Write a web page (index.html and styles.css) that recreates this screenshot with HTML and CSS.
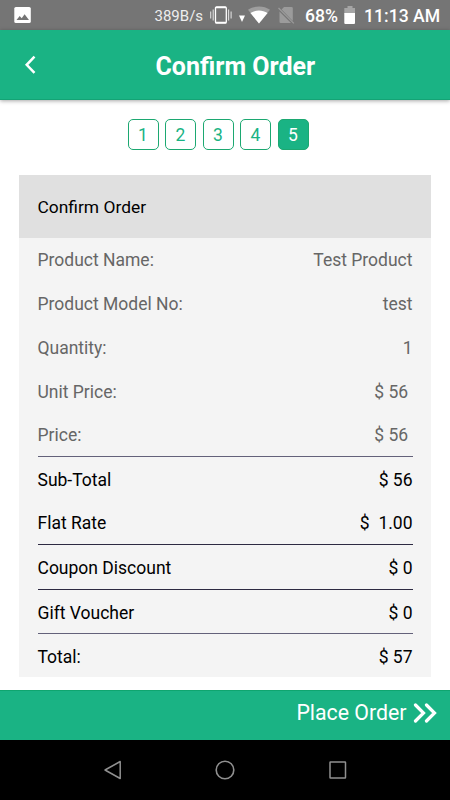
FILE: index.html
```html
<!DOCTYPE html>
<html lang="en">
<head>
<meta charset="utf-8">
<title>Confirm Order</title>
<link rel="stylesheet" href="styles.css">
</head>
<body>
<div class="screen">
  <div class="status">
    <svg class="ic-photo" width="18" height="18" viewBox="0 0 18 18"><rect x="0.3" y="1" width="16.5" height="16" rx="1.6" fill="#fff"/><path d="M2.5 14l3.2-4 2 2.300 2.900-4.100 4.400 5.800z" fill="#757575"/></svg>
    <span class="speed">389B/s</span>
    <svg class="ic-vibrate" width="22" height="18" viewBox="0 0 22 18"><rect x="5.500" y="0.800" width="10.800" height="16.400" rx="1.200" fill="none" stroke="#fff" stroke-width="1.300"/><path d="M6 1.500h10M6 16.500h10" stroke="#fff" stroke-width="1.300"/><path d="M3.200 3.500v11M18.600 3.500v11M.7 5.500v7M21.100 5.500v7" stroke="#ddd" stroke-width="1.100"/></svg>
    <svg class="ic-down" width="6" height="7" viewBox="0 0 6 7"><path d="M0 .6h6L3 7z" fill="#fff"/></svg>
    <svg class="ic-wifi" width="22" height="18" viewBox="0 0 22 18"><path d="M0 3.800C6-.7 16-.7 22 3.800L11 17.500z" fill="#9e9e9e"/><path d="M2.400 7C7.700 3.500 14.300 3.500 19.600 7L11 17.500z" fill="#fff"/></svg>
    <svg class="ic-sim" width="17" height="18" viewBox="0 0 17 18"><path d="M6 1h7.500q1.300 0 1.300 1.300V15L3.600 3.400zM1.500 5.500L13 17H2.800q-1.300 0-1.300-1.300z" fill="#9b9b9b"/><path d="M.5 2L15.800 17.300" stroke="#9b9b9b" stroke-width="1.200"/></svg>
    <span class="percent">68%</span>
    <svg class="ic-battery" width="12" height="18" viewBox="0 0 12 18"><path d="M3.500 0h5v2H11v5.500H.3V2h3.200z" fill="#a5a5a5"/><path d="M.3 7H11v10q0 1-1 1H1.300q-1 0-1-1z" fill="#fff"/></svg>
    <span class="clock">11:13 AM</span>
  </div>
  <header class="header">
    <svg class="back" width="12" height="20" viewBox="0 0 12 20"><path d="M10.500 1.700L2.700 9.800l7.800 8.100" fill="none" stroke="#fff" stroke-width="2.500"/></svg>
    <h1 class="title">Confirm Order</h1>
  </header>
  <nav class="steps">
    <span class="step">1</span><span class="step">2</span><span class="step">3</span><span class="step">4</span><span class="step active">5</span>
  </nav>
  <main class="card">
    <h2 class="card-title">Confirm Order</h2>
    <div class="rows">
      <div class="row"><span>Product Name:</span><span>Test Product</span></div>
      <div class="row"><span>Product Model No:</span><span>test</span></div>
      <div class="row"><span>Quantity:</span><span>1</span></div>
      <div class="row"><span>Unit Price:</span><span>$ 56&nbsp;</span></div>
      <div class="row"><span>Price:</span><span>$ 56&nbsp;</span></div>
      <div class="row strong line-soft"><span>Sub-Total</span><span>$ 56</span></div>
      <div class="row strong"><span>Flat Rate</span><span>$&nbsp; 1.00</span></div>
      <div class="row strong line"><span>Coupon Discount</span><span>$ 0</span></div>
      <div class="row strong line"><span>Gift Voucher</span><span>$ 0</span></div>
      <div class="row strong line-soft"><span>Total:</span><span>$ 57</span></div>
    </div>
  </main>
  <footer class="place">
    <span>Place Order</span>
    <svg width="24" height="20" viewBox="0 0 24 20"><path d="M2.500 2l8 8-8 8M13.500 2l8 8-8 8" fill="none" stroke="#fff" stroke-width="3.200" stroke-linecap="round"/></svg>
  </footer>
  <div class="navbar">
    <svg width="20" height="20" viewBox="0 0 20 20"><path d="M17.200 1.500v17L2 10z" fill="none" stroke="#909090" stroke-width="1.500" stroke-linejoin="round"/></svg>
    <svg width="20" height="20" viewBox="0 0 20 20"><circle cx="10" cy="10" r="8.800" fill="none" stroke="#909090" stroke-width="1.600"/></svg>
    <svg width="20" height="20" viewBox="0 0 20 20"><rect x="2" y="2" width="15.500" height="16" rx="0.500" fill="none" stroke="#909090" stroke-width="1.500"/></svg>
  </div>
</div>
</body>
</html>
```
FILE: styles.css
```css
* { box-sizing: border-box; }
body { margin: 0; font-family: Roboto, "Liberation Sans", sans-serif; background: #fff; }
svg { display: block; flex: none; }
.screen { width: 450px; height: 800px; display: flex; flex-direction: column; overflow: hidden; }
.status { height: 30px; flex: none; background: #757575; color: #fff; display: flex; align-items: center; padding-left: 14px; line-height: 30px; white-space: nowrap; }
.status span { flex: none; }
.speed { width: 56px; margin-left: 122.500px; margin-right: -0.500px; font-size: 15px; color: #eee; padding-top: 1px; }
.ic-down { margin: 7px 3px 0 7px; }
.ic-sim { margin-left: 8px; }
.percent { width: 38px; margin-left: 10px; font-size: 17.600px; font-weight: 500; padding-top: 1px; }
.ic-battery { margin-left: 1px; }
.clock { margin-left: 8px; font-size: 17.600px; font-weight: 500; padding-top: 1px; }
.header { height: 70px; flex: none; background: #1ab384; border-bottom: 1px solid #14a375; display: flex; align-items: center; padding-left: 24px; box-shadow: 0 1px 4px rgba(0, 0, 0, .35); color: #fff; }
.title { margin: 5px 0 0 119.500px; font-size: 25px; line-height: 30px; font-weight: 700; white-space: nowrap; }
.steps { display: flex; gap: 6.500px; padding: 19px 0 0 127.500px; height: 75px; flex: none; }
.step { width: 31px; height: 31px; border: 1px solid #1ca871; border-radius: 5px; color: #1ab384; font-size: 17.500px; line-height: 30px; text-align: center; }
.step.active { background: #1ab384; color: #fff; }
.card { margin: 0 19px; height: 502px; flex: none; background: #f4f4f4; }
.card-title { margin: 0; height: 62.500px; padding: 1px 18.500px 0; background: #e0e0e0; font-size: 17.400px; line-height: 62px; font-weight: 400; color: #000; }
.rows { padding: 0 18.500px; }
.row { display: flex; justify-content: space-between; height: 43.700px; line-height: 46.500px; font-size: 17.500px; color: #666; white-space: nowrap; }
.row:first-child { line-height: 45px; }
.strong { color: #000; }
.line { height: 44.600px; border-top: 1px solid #2d2a42; }
.line-soft { height: 44.300px; border-top: 1px solid #63617a; }
.place { margin-top: 13px; height: 50px; flex: none; background: #1ab384; border-top: 1px solid #0fa56f; display: flex; justify-content: flex-end; align-items: center; gap: 6.500px; padding: 0 13px 5px 0; color: #fff; font-size: 21.300px; line-height: 30px; }
.place span { margin-top: -1px; }
.navbar { height: 60px; flex: none; background: #000; display: flex; justify-content: center; align-items: center; gap: 92.500px; }
```
